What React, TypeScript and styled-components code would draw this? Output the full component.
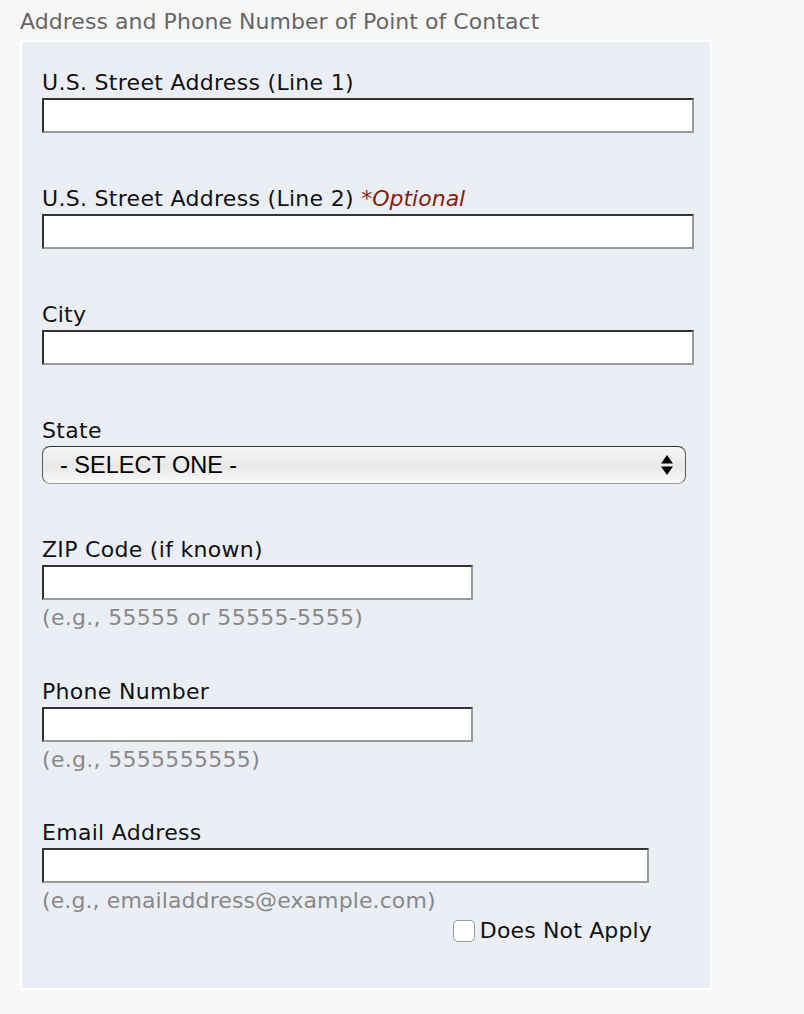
import React from "react";
import styled, { createGlobalStyle } from "styled-components";

const Global = createGlobalStyle`
  html, body { margin: 0; padding: 0; background: #f7f7f7; }
  body { font-family: "DejaVu Sans", Verdana, sans-serif; }
`;

const Page = styled.div`
  padding: 8px 0 0 20px;
  width: 692px;
`;

const Legend = styled.div`
  font-size: 22px;
  letter-spacing: 0.05px;
  color: #666;
  line-height: 28px;
  height: 32px;
`;

const Panel = styled.div`
  background: #ebeff5;
  border: 2px solid #fff;
  padding: 26px 0 44px 20px;
  box-sizing: border-box;
  width: 692px;
  height: 950px;
`;

const Field = styled.div<{ $gap?: number }>`
  display: flex;
  flex-direction: column;
  align-items: flex-start;
  margin-bottom: ${(p) => p.$gap ?? 51}px;
`;

const Label = styled.label`
  font-size: 22px;
  letter-spacing: 0.3px;
  color: #111;
  line-height: 29px;
  height: 30px;
  white-space: nowrap;
`;

const Optional = styled.span`
  color: #8b1a10;
  font-style: italic;
  letter-spacing: 0;
`;

const TextInput = styled.input<{ $w: number }>`
  width: ${(p) => p.$w}px;
  height: 35px;
  box-sizing: border-box;
  background: #fff;
  border-style: solid;
  border-width: 2px;
  border-color: #333 #999 #999 #333;
  margin: 0;
  padding: 0 4px;
  font-size: 18px;
  font-family: "DejaVu Sans", sans-serif;
`;

const Hint = styled.div<{ $ls?: number }>`
  font-size: 22px;
  letter-spacing: ${(p) => p.$ls ?? 0.3}px;
  color: #888;
  line-height: 28px;
  margin-top: 4px;
`;

const SelectBox = styled.div`
  width: 644px;
  height: 38px;
  box-sizing: border-box;
  border: 1.5px solid #555;
  border-top-color: #333;
  border-bottom-color: #999;
  border-radius: 8px;
  background: linear-gradient(#f6f6f6, #e8e8e8 55%, #fafafa);
  display: flex;
  align-items: center;
  justify-content: space-between;
  padding: 0 12px 0 17px;
  font-family: "Liberation Sans", Arial, sans-serif;
  font-size: 23.5px;
  color: #000;
`;

const CheckRow = styled.div`
  display: flex;
  align-items: center;
  justify-content: flex-end;
  width: 610px;
  margin-top: 3px;
  font-size: 22px;
  letter-spacing: 0.15px;
  color: #111;
  gap: 5px;
`;

const Box = styled.span`
  width: 22px;
  height: 22px;
  box-sizing: border-box;
  border: 1px solid #999;
  border-radius: 5px;
  background: #fff;
`;

export default function App() {
  return (
    <>
      <Global />
      <Page>
        <Legend>Address and Phone Number of Point of Contact</Legend>
        <Panel>
          <Field>
            <Label>U.S. Street Address (Line 1)</Label>
            <TextInput $w={652} />
          </Field>
          <Field>
            <Label>
              U.S. Street Address (Line 2) <Optional>*Optional</Optional>
            </Label>
            <TextInput $w={652} />
          </Field>
          <Field>
            <Label>City</Label>
            <TextInput $w={652} />
          </Field>
          <Field>
            <Label>State</Label>
            <SelectBox>
              <span>- SELECT ONE -</span>
              <svg width="12" height="20" viewBox="0 0 12 20">
                <path d="M6 0 L12 8.5 L0 8.5 Z M0 11.5 L12 11.5 L6 20 Z" fill="#000" />
              </svg>
            </SelectBox>
          </Field>
          <Field $gap={45}>
            <Label>ZIP Code (if known)</Label>
            <TextInput $w={431} />
            <Hint>(e.g., 55555 or 55555-5555)</Hint>
          </Field>
          <Field $gap={44}>
            <Label>Phone Number</Label>
            <TextInput $w={431} />
            <Hint>(e.g., 5555555555)</Hint>
          </Field>
          <Field $gap={0}>
            <Label>Email Address</Label>
            <TextInput $w={607} />
            <Hint $ls={0.1}>(e.g., emailaddress@example.com)</Hint>
            <CheckRow>
              <Box />
              <span>Does Not Apply</span>
            </CheckRow>
          </Field>
        </Panel>
      </Page>
    </>
  );
}
